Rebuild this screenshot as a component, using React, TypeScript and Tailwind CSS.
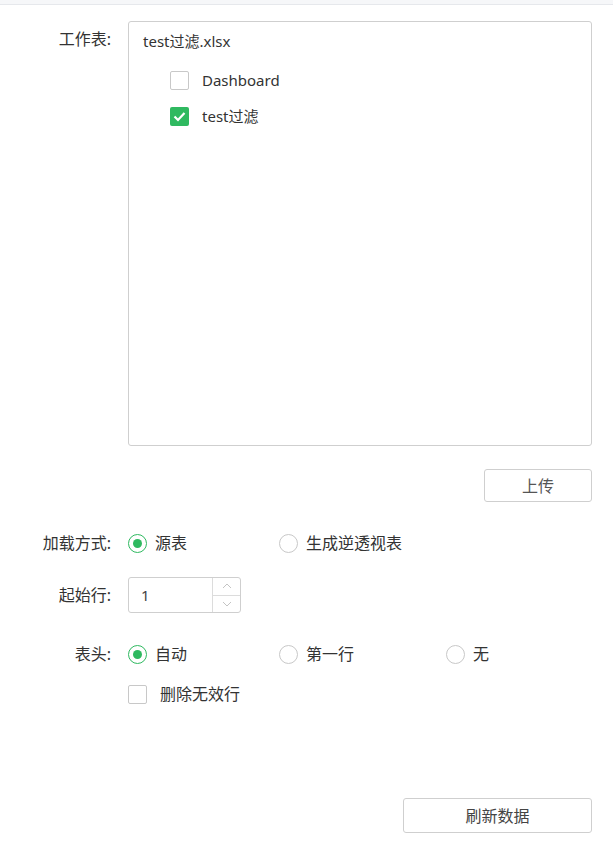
import React, { useState } from 'react';

function Radio({ checked, label, width }: { checked?: boolean; label: string; width: string }) {
  return (
    <label className={`flex items-center ${width}`}>
      <span
        className={`flex h-[19px] w-[19px] items-center justify-center rounded-full border ${
          checked ? 'border-[#2fb960]' : 'border-[#c8c8c8]'
        }`}
      >
        {checked && <span className="h-[9px] w-[9px] rounded-full bg-[#2fb960]" />}
      </span>
      <span className="ml-[8px] text-[16px]">{label}</span>
    </label>
  );
}

function Check({ checked }: { checked?: boolean }) {
  return checked ? (
    <span className="flex h-[19px] w-[19px] items-center justify-center rounded-[2px] bg-[#2fb960]">
      <svg width="13" height="11" viewBox="0 0 13 11">
        <path d="M1.5 5.5 L5 9 L11.5 2" fill="none" stroke="white" strokeWidth="2.2" />
      </svg>
    </span>
  ) : (
    <span className="h-[19px] w-[19px] rounded-[2px] border border-[#c8c8c8] bg-white" />
  );
}

export default function App() {
  const [sheets] = useState([
    { name: 'Dashboard', checked: false },
    { name: 'test过滤', checked: true },
  ]);

  return (
    <div
      className="h-[845px] w-[613px] bg-white text-[15px] text-[#333]"
      style={{ fontFamily: '"Noto Sans", "Noto Sans CJK SC", sans-serif' }}
    >
      <div className="h-[5px] border-b border-[#e6e8ec] bg-[#f6f7f9]" />

      <div className="mt-[16px] flex">
        <div className="w-[128px] pr-[17px] pt-[8px] text-right text-[16px] leading-[20px]">工作表:</div>
        <div className="h-[425px] w-[464px] rounded-[3px] border border-[#cfcfcf] px-[14px] pt-[9px]">
          <div className="leading-[20px]">test过滤.xlsx</div>
          <div className="mt-[19px] flex flex-col gap-[16px] pl-[27px]">
            {sheets.map((s) => (
              <div key={s.name} className="flex items-center leading-[20px]">
                <Check checked={s.checked} />
                <span className="ml-[13px]">{s.name}</span>
              </div>
            ))}
          </div>
        </div>
      </div>

      <div className="mt-[23px] flex justify-end pr-[21px]">
        <button className="h-[33px] w-[108px] rounded-[3px] border border-[#cfcfcf] bg-white text-[16px] text-[#555]">
          上传
        </button>
      </div>

      <div className="mt-[31px] flex items-center leading-[20px]">
        <div className="w-[128px] pr-[17px] text-right text-[16px]">加载方式:</div>
        <Radio checked label="源表" width="w-[151px]" />
        <Radio label="生成逆透视表" width="w-[160px]" />
      </div>

      <div className="mt-[24px] flex items-center">
        <div className="w-[128px] pr-[17px] text-right text-[16px]">起始行:</div>
        <div className="flex h-[36px] w-[113px] rounded-[3px] border border-[#cfcfcf]">
          <div className="flex flex-1 items-center pl-[12px] text-[#444]">1</div>
          <div className="flex w-[28px] flex-col border-l border-[#dcdcdc]">
            <div className="flex flex-1 items-center justify-center border-b border-[#dcdcdc]">
              <svg width="10" height="6" viewBox="0 0 10 6">
                <path d="M1 5 L5 1 L9 5" fill="none" stroke="#c4c4c4" strokeWidth="1" />
              </svg>
            </div>
            <div className="flex flex-1 items-center justify-center">
              <svg width="10" height="6" viewBox="0 0 10 6">
                <path d="M1 1 L5 5 L9 1" fill="none" stroke="#c4c4c4" strokeWidth="1" />
              </svg>
            </div>
          </div>
        </div>
      </div>

      <div className="mt-[31px] flex items-center leading-[20px]">
        <div className="w-[128px] pr-[17px] text-right text-[16px]">表头:</div>
        <Radio checked label="自动" width="w-[151px]" />
        <Radio label="第一行" width="w-[167px]" />
        <Radio label="无" width="w-[60px]" />
      </div>

      <div className="ml-[128px] mt-[20px] flex items-center leading-[20px]">
        <Check />
        <span className="ml-[13px] text-[16px]">删除无效行</span>
      </div>

      <div className="mt-[94px] flex justify-end pr-[21px]">
        <button className="h-[35px] w-[189px] rounded-[3px] border border-[#cfcfcf] bg-white text-[16px] text-[#444]">
          刷新数据
        </button>
      </div>
    </div>
  );
}
